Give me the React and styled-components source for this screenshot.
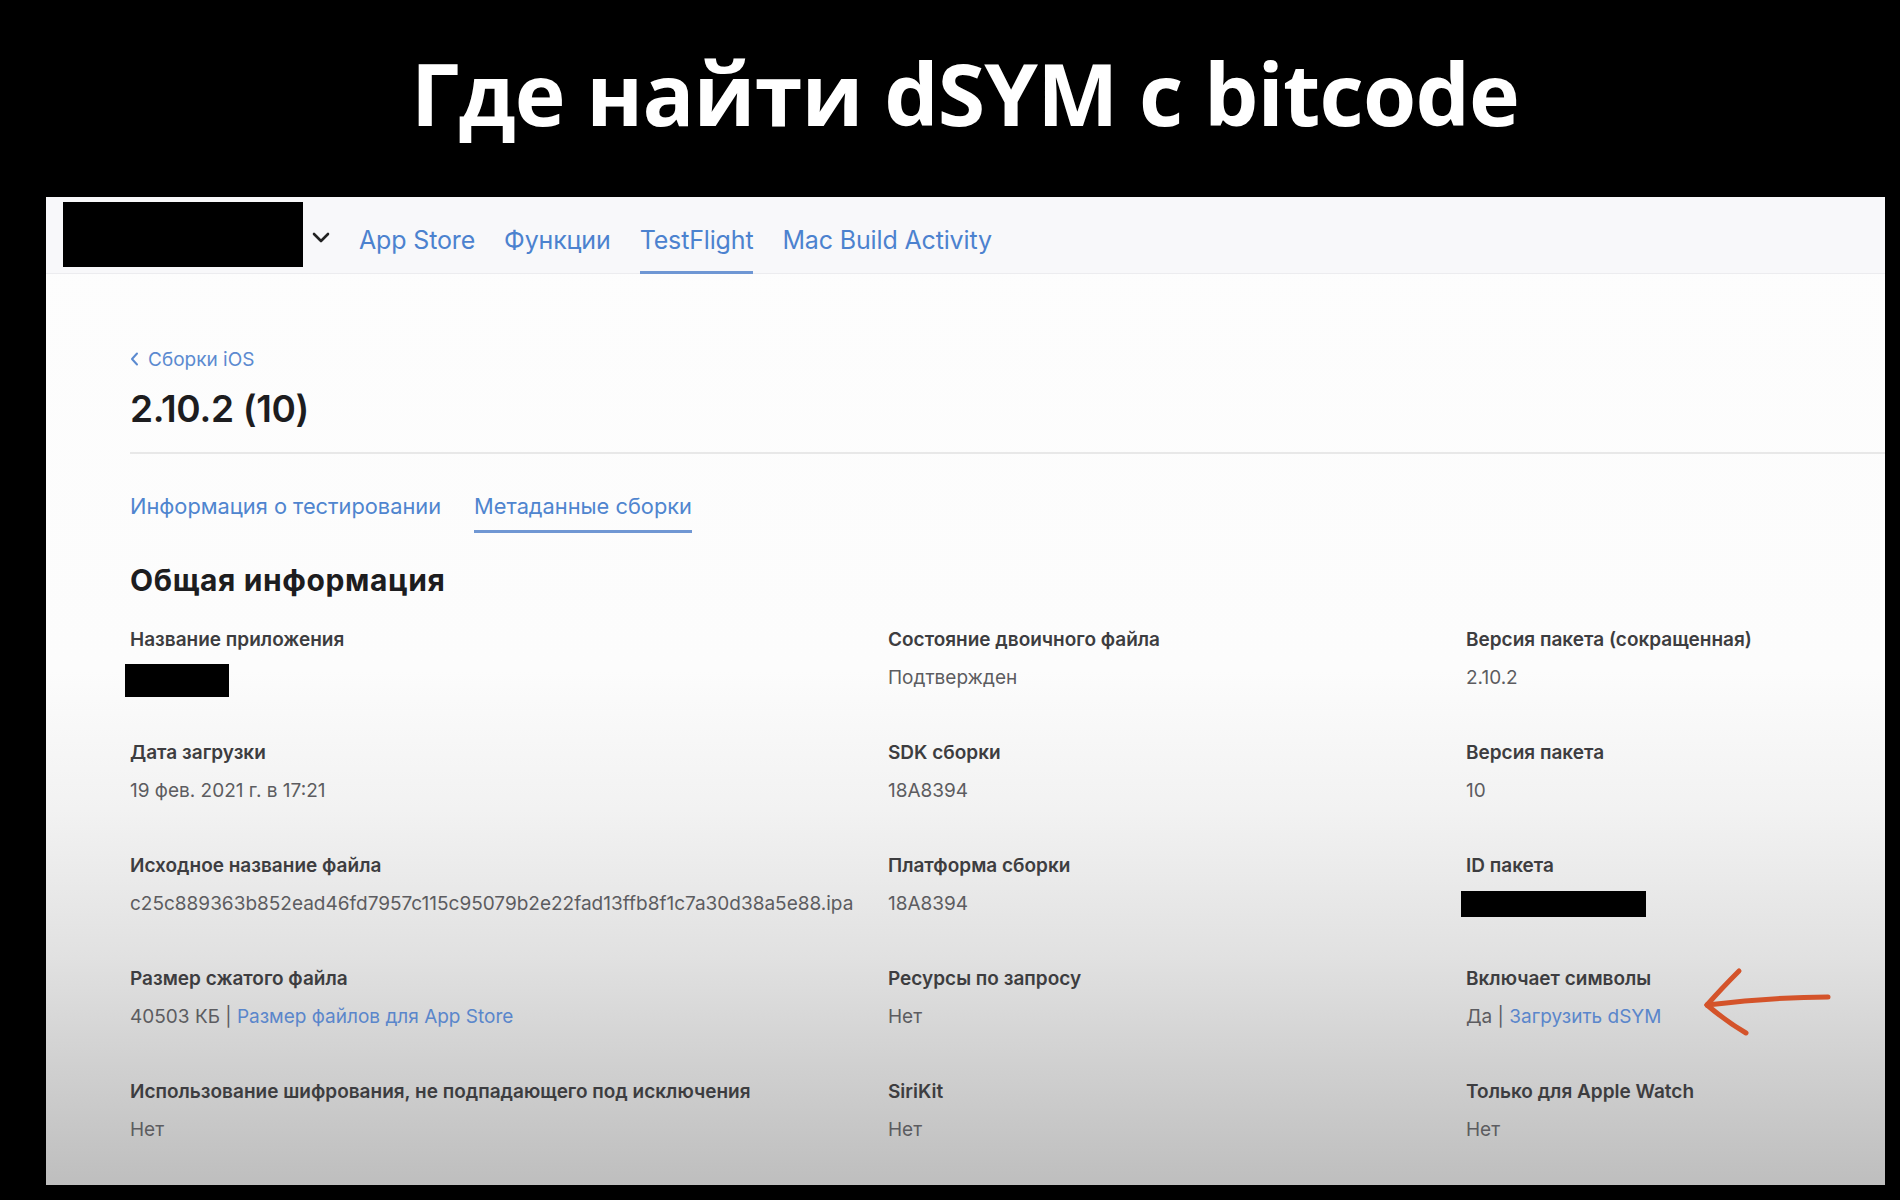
import React from 'react';
import styled, { createGlobalStyle } from 'styled-components';

const GlobalStyle = createGlobalStyle`
  html, body {
    margin: 0;
    padding: 0;
    background: #000;
  }
`;

const Screen = styled.div`
  width: 1900px;
  height: 1200px;
  background: #000;
  display: flex;
  flex-direction: column;
  overflow: hidden;
`;

const Header = styled.div`
  height: 197px;
  display: flex;
  align-items: center;
  justify-content: center;
  padding-left: 30px;
  box-sizing: border-box;
`;

const Headline = styled.h1`
  margin: 0 0 12px;
  color: #fff;
  font-family: 'Open Sans', 'Noto Sans', sans-serif;
  font-weight: 700;
  font-size: 86px;
  line-height: 1;
  letter-spacing: -0.8px;
`;

const Panel = styled.div`
  position: relative;
  margin-left: 46px;
  width: 1839px;
  height: 988px;
  background: linear-gradient(
    to bottom,
    #fdfdfd 0%,
    #fcfcfc 48%,
    #f2f2f2 62%,
    #e1e1e1 77%,
    #cdcdcd 90%,
    #bebebe 100%
  );
  font-family: Inter, 'Noto Sans', sans-serif;
`;

const NavBar = styled.div`
  height: 77px;
  box-sizing: border-box;
  display: flex;
  align-items: flex-start;
  padding: 5px 0 0 17px;
  background: #f8f8fa;
  border-bottom: 1px solid #ececef;
`;

const Redact = styled.div`
  background: #000;
  width: ${p => p.w}px;
  height: ${p => p.h}px;
  margin-left: ${p => p.ml || 0}px;
  margin-top: ${p => p.mt || 0}px;
  margin-bottom: ${p => p.mb || 0}px;
`;

const Chevron = styled.svg`
  margin: 29px 28px 0 8px;
  flex: none;
`;

const NavLinks = styled.div`
  display: flex;
  gap: 29px;
  height: 72px;
`;

const NavLink = styled.a`
  display: flex;
  align-items: center;
  height: 100%;
  box-sizing: border-box;
  padding-top: ${p => (p.active ? '6px' : '4px')};
  font-size: 25px;
  color: #4c82cf;
  border-bottom: ${p => (p.active ? '3px solid #6f97d4' : '0')};
  letter-spacing: -0.15px;
`;

const Content = styled.div`
  padding: 74px 0 0 84px;
`;

const BackLink = styled.a`
  display: flex;
  align-items: center;
  gap: 9px;
  height: 22px;
  font-size: 19px;
  color: #5b8ad0;
`;

const BuildTitle = styled.h2`
  margin: 17px 0 0;
  font-size: 37px;
  line-height: 44px;
  font-weight: 600;
  color: #1d1d1f;
  letter-spacing: -0.3px;
`;

const Divider = styled.div`
  margin-top: 21px;
  height: 2px;
  background: #e8e8e8;
`;

const Tabs = styled.div`
  display: flex;
  gap: 33px;
  margin-top: 39px;
`;

const Tab = styled.a`
  display: block;
  font-size: 21.8px;
  line-height: 26px;
  padding-bottom: 11px;
  color: #4f85cf;
  border-bottom: 3px solid ${p => (p.active ? '#7097d3' : 'transparent')};
`;

const SectionTitle = styled.h3`
  margin: 29px 0 0;
  font-size: 30px;
  line-height: 36px;
  font-weight: 700;
  color: #1d1d1f;
  letter-spacing: 0.6px;
`;

const Grid = styled.div`
  display: grid;
  grid-template-columns: 758px 578px 1fr;
  row-gap: 52px;
  margin-top: 30px;
`;

const Field = styled.div`
  display: flex;
  flex-direction: column;
  gap: 15px;
`;

const Label = styled.div`
  font-size: 19px;
  line-height: 23px;
  font-weight: 600;
  color: #3d3d40;
`;

const Value = styled.div`
  font-size: 19px;
  line-height: 23px;
  color: #5c5c60;
  height: 23px;
  white-space: nowrap;
`;

const InlineLink = styled.span`
  color: #5a86cb;
`;

const Arrow = styled.svg`
  position: absolute;
  left: 1649px;
  top: 767px;
`;

const fields = [
  { label: 'Название приложения', value: <Redact w={104} h={33} ml={-5} mt={-2} mb={-8} /> },
  { label: 'Состояние двоичного файла', value: 'Подтвержден' },
  { label: 'Версия пакета (сокращенная)', value: '2.10.2' },
  { label: 'Дата загрузки', value: '19 фев. 2021 г. в 17:21' },
  { label: 'SDK сборки', value: '18A8394' },
  { label: 'Версия пакета', value: '10' },
  { label: 'Исходное название файла', value: 'c25c889363b852ead46fd7957c115c95079b2e22fad13ffb8f1c7a30d38a5e88.ipa' },
  { label: 'Платформа сборки', value: '18A8394' },
  { label: 'ID пакета', value: <Redact w={185} h={26} ml={-5} mt={-1} mb={-2} /> },
  {
    label: 'Размер сжатого файла',
    value: <>40503 КБ | <InlineLink>Размер файлов для App Store</InlineLink></>,
  },
  { label: 'Ресурсы по запросу', value: 'Нет' },
  {
    label: 'Включает символы',
    value: <>Да | <InlineLink>Загрузить dSYM</InlineLink></>,
  },
  { label: 'Использование шифрования, не подпадающего под исключения', value: 'Нет' },
  { label: 'SiriKit', value: 'Нет' },
  { label: 'Только для Apple Watch', value: 'Нет' },
];

export default function App() {
  return (
    <Screen>
      <GlobalStyle />
      <Header>
        <Headline>Где найти dSYM с bitcode</Headline>
      </Header>
      <Panel>
        <NavBar>
          <Redact w={240} h={65} />
          <Chevron width="20" height="14" viewBox="0 0 20 14">
            <path d="M3 3 L10 10 L17 3" fill="none" stroke="#222" strokeWidth="2.6" strokeLinecap="round" strokeLinejoin="round" />
          </Chevron>
          <NavLinks>
            <NavLink>App Store</NavLink>
            <NavLink>Функции</NavLink>
            <NavLink active>TestFlight</NavLink>
            <NavLink>Mac Build Activity</NavLink>
          </NavLinks>
        </NavBar>
        <Content>
          <BackLink>
            <svg width="9" height="14" viewBox="0 0 9 14">
              <path d="M7 1.5 L2 7 L7 12.5" fill="none" stroke="#5b8ad0" strokeWidth="2" strokeLinecap="round" strokeLinejoin="round" />
            </svg>
            Сборки iOS
          </BackLink>
          <BuildTitle>2.10.2 (10)</BuildTitle>
          <Divider />
          <Tabs>
            <Tab>Информация о тестировании</Tab>
            <Tab active>Метаданные сборки</Tab>
          </Tabs>
          <SectionTitle>Общая информация</SectionTitle>
          <Grid>
            {fields.map(f => (
              <Field key={f.label}>
                <Label>{f.label}</Label>
                <Value>{f.value}</Value>
              </Field>
            ))}
          </Grid>
        </Content>
        <Arrow width="150" height="80" viewBox="0 0 150 80">
          <g fill="none" stroke="#d4532a" strokeWidth="5" strokeLinecap="round" strokeLinejoin="round">
            <path d="M133 33 Q 80 33 12 41" />
            <path d="M44 7 Q 26 25 12 41" />
            <path d="M12 41 Q 32 58 51 69" />
          </g>
        </Arrow>
      </Panel>
    </Screen>
  );
}
